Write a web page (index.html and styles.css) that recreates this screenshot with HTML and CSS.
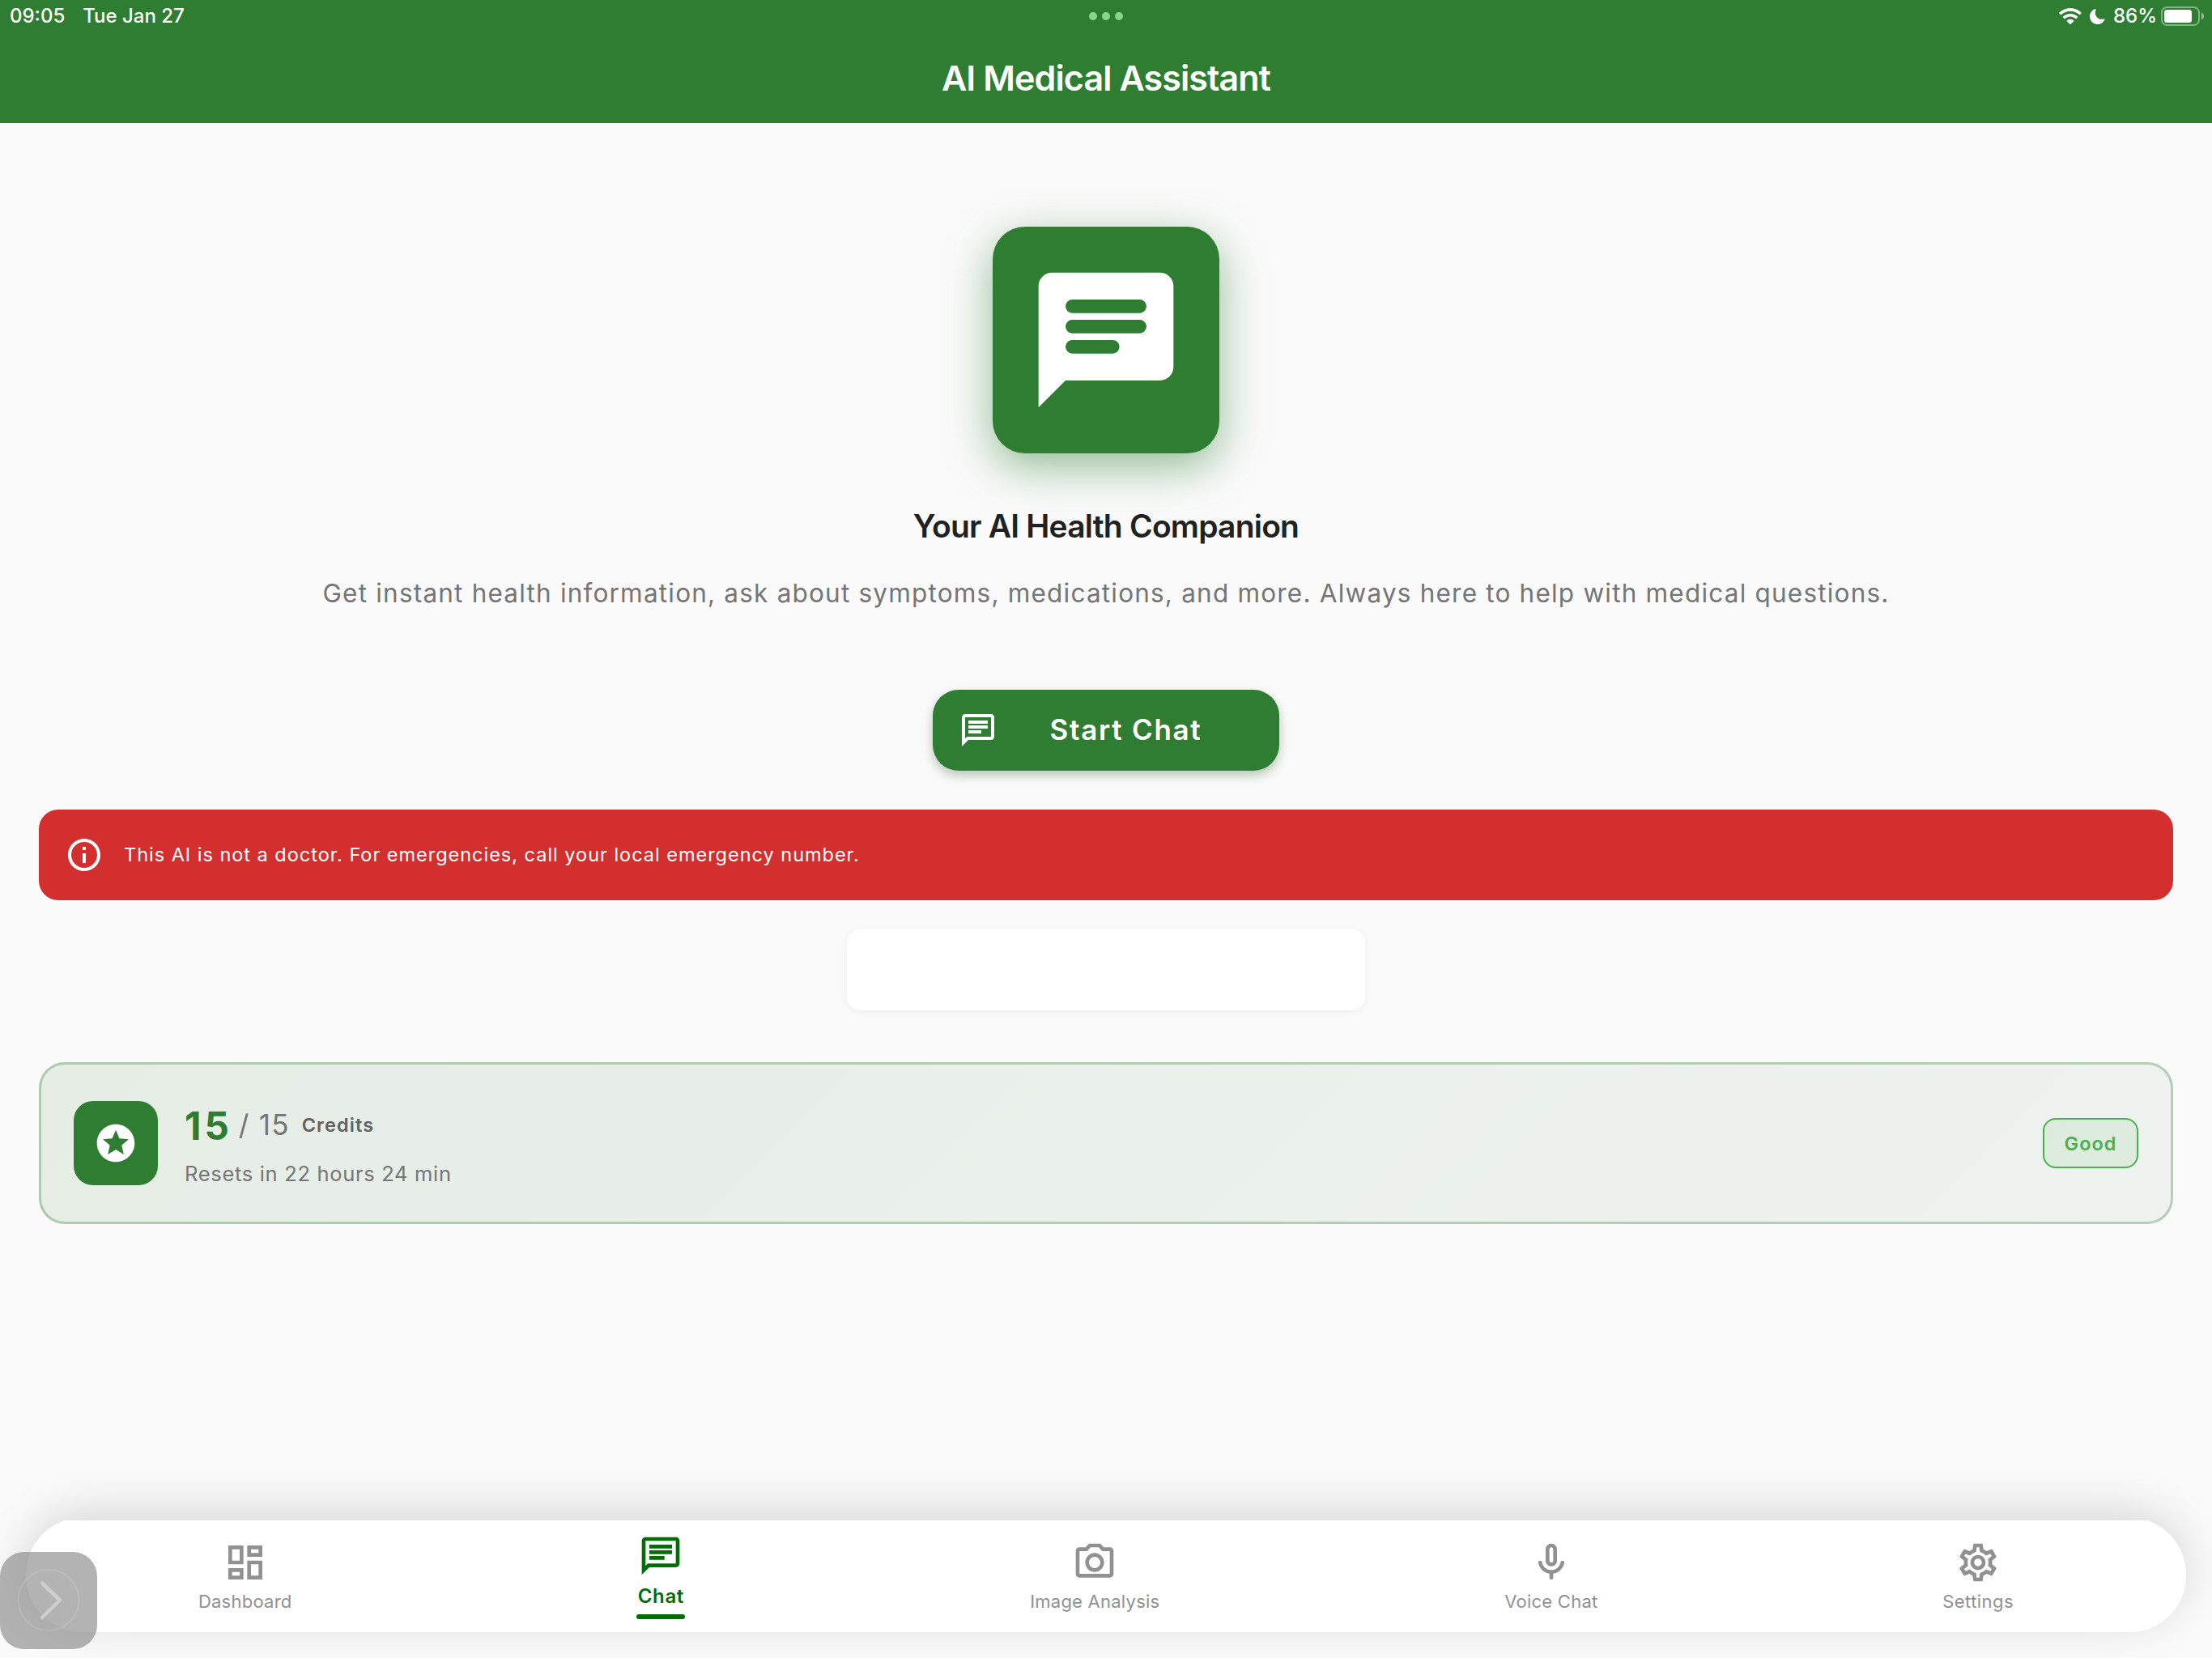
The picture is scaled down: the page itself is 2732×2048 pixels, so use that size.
FILE: index.html
```html
<!DOCTYPE html>
<html lang="en">
<head>
<meta charset="utf-8">
<title>AI Medical Assistant</title>
<link rel="stylesheet" href="styles.css">
</head>
<body>
<svg class="defs" aria-hidden="true">
  <symbol id="chat" viewBox="0 0 24 24"><path d="M4 4h16v12H5.170L4 17.170V4m0-2c-1.100 0-1.990.9-1.990 2L2 22l4-4h14c1.100 0 2-.9 2-2V4c0-1.100-.9-2-2-2H4zm2 10h8v2H6v-2zm0-3h12v2H6V9zm0-3h12v2H6V6z"/></symbol>
</svg>
<div class="screen">
  <header class="top">
    <div class="status">
      <div class="status-side"><span>09:05</span><span class="date">Tue Jan 27</span></div>
      <div class="dots"><i></i><i></i><i></i></div>
      <div class="status-side end">
        <svg class="wifi" viewBox="0 0 28 20"><path d="M14 0C8.700 0 3.900 2.100.4 5.400c-.3.300-.3.700 0 1l1.600 1.600c.3.300.7.300 1 0C5.900 5.300 9.800 3.700 14 3.700s8.100 1.600 11 4.300c.3.300.7.300 1 0l1.600-1.600c.3-.3.3-.7 0-1C24.100 2.100 19.300 0 14 0zM14 6.900c-3.500 0-6.600 1.300-9 3.500-.3.300-.3.700 0 1l1.600 1.600c.3.300.7.300 1 0 1.700-1.500 3.900-2.500 6.400-2.500s4.700 1 6.400 2.500c.3.300.7.300 1 0l1.600-1.600c.3-.3.3-.7 0-1-2.400-2.200-5.500-3.500-9-3.500zM14 13.700c-1.600 0-3.100.6-4.200 1.600-.3.300-.3.700 0 1l3.600 3.500c.3.300.8.300 1.100 0l3.700-3.500c.3-.3.300-.7 0-1-1.100-1-2.600-1.600-4.200-1.600z"/></svg>
        <svg class="moon" viewBox="0 0 19 19"><path d="M7 0C2.900 1.200 0 4.900 0 9.300 0 14.700 4.300 19 9.700 19c4.100 0 7.600-2.600 8.900-6.300.1-.4-.2-.7-.6-.5-1 .4-2 .6-3.100.6-4.500 0-8.100-3.600-8.100-8.100 0-1.400.3-2.700.9-3.900C7.900.3 7.500-.1 7 0z"/></svg>
        <span>86%</span>
        <svg class="battery" viewBox="0 0 54 24"><rect x="1" y="1" width="46" height="22" rx="6.500" fill="none" stroke="#fff" stroke-opacity=".42" stroke-width="2"/><rect x="4" y="4" width="34" height="16" rx="3.500"/><path d="M50 7.500c1.700.7 3 2.300 3 4.500s-1.300 3.800-3 4.500z" fill-opacity=".5"/></svg>
      </div>
    </div>
    <h1 class="title">AI Medical Assistant</h1>
  </header>

  <main class="content">
    <div class="hero"><svg class="hero-icon" viewBox="0 0 24 24"><path fill-rule="evenodd" d="M4 2h16c1.100 0 2 .9 2 2v12c0 1.100-.9 2-2 2H6l-4 4V4c0-1.100.9-2 2-2zM7 6a1 1 0 0 0 0 2h10a1 1 0 0 0 0-2zM7 9a1 1 0 0 0 0 2h10a1 1 0 0 0 0-2zM7 12a1 1 0 0 0 0 2h6a1 1 0 0 0 0-2z"/></svg></div>
    <h2 class="headline">Your AI Health Companion</h2>
    <p class="lead">Get instant health information, ask about symptoms, medications, and more. Always here to help with medical questions.</p>
    <button class="start"><svg class="start-icon"><use href="#chat"/></svg><span class="start-label">Start Chat</span></button>

    <div class="warning">
      <svg class="warning-icon" viewBox="0 0 24 24"><path d="M11 7h2v2h-2zm0 4h2v6h-2zm1-9C6.480 2 2 6.480 2 12s4.480 10 10 10 10-4.480 10-10S17.520 2 12 2zm0 18c-4.410 0-8-3.590-8-8s3.590-8 8-8 8 3.590 8 8-3.590 8-8 8z"/></svg>
      <span>This AI is not a doctor. For emergencies, call your local emergency number.</span>
    </div>

    <div class="blank-card"></div>

    <section class="credits">
      <div class="credits-icon"><svg viewBox="0 0 24 24"><path d="M11.990 2C6.470 2 2 6.480 2 12s4.470 10 9.990 10C17.520 22 22 17.520 22 12S17.520 2 11.990 2zm4.240 16L12 15.450 7.770 18l1.120-4.810-3.730-3.230 4.920-.42L12 5l1.920 4.530 4.920.42-3.730 3.230L16.230 18z"/></svg></div>
      <div class="credits-text">
        <div class="credits-row"><strong class="count">15</strong><span class="total">/ 15</span><span class="unit">Credits</span></div>
        <div class="resets">Resets in 22 hours 24 min</div>
      </div>
      <div class="badge">Good</div>
    </section>
  </main>

  <nav class="tabs">
    <a class="tab"><svg class="tab-icon" viewBox="0 0 24 24"><path d="M19 5v2h-4V5h4M9 5v6H5V5h4m10 8v6h-4v-6h4M9 17v2H5v-2h4M21 3h-8v6h8V3zM11 3H3v10h8V3zm10 8h-8v10h8V11zm-10 4H3v6h8v-6z"/></svg><span>Dashboard</span></a>
    <a class="tab active"><svg class="tab-icon"><use href="#chat"/></svg><span>Chat</span></a>
    <a class="tab"><svg class="tab-icon" viewBox="0 0 24 24"><path d="M14.120 4l1.830 2H20v12H4V6h4.050l1.830-2h4.240M15 2H9L7.170 4H4c-1.100 0-2 .9-2 2v12c0 1.100.9 2 2 2h16c1.100 0 2-.9 2-2V6c0-1.100-.9-2-2-2h-3.170L15 2zm-3 7c1.650 0 3 1.350 3 3s-1.350 3-3 3-3-1.350-3-3 1.350-3 3-3m0-2c-2.760 0-5 2.240-5 5s2.240 5 5 5 5-2.240 5-5-2.240-5-5-5z"/></svg><span>Image Analysis</span></a>
    <a class="tab"><svg class="tab-icon" viewBox="0 0 24 24"><path d="M12 14c1.660 0 3-1.340 3-3V5c0-1.660-1.340-3-3-3S9 3.340 9 5v6c0 1.660 1.340 3 3 3zm-1-9c0-.55.45-1 1-1s1 .45 1 1v6c0 .55-.45 1-1 1s-1-.45-1-1V5zm6.910 6c-.49 0-.9.36-.98.85C16.520 14.200 14.470 16 12 16s-4.520-1.800-4.930-4.150c-.08-.49-.49-.85-.98-.85-.61 0-1.090.54-1 1.140.49 3 2.890 5.350 5.910 5.780V20c0 .55.45 1 1 1s1-.45 1-1v-2.080c3.020-.43 5.420-2.780 5.910-5.780.1-.6-.39-1.140-1-1.140z"/></svg><span>Voice Chat</span></a>
    <a class="tab"><svg class="tab-icon" viewBox="0 0 24 24"><path d="M19.430 12.980c.04-.32.07-.64.07-.98s-.03-.66-.07-.98l2.110-1.650c.19-.15.24-.42.12-.64l-2-3.460c-.09-.16-.26-.25-.44-.25-.06 0-.12.01-.17.03l-2.490 1c-.52-.4-1.080-.73-1.690-.98l-.38-2.650C14.460 2.180 14.250 2 14 2h-4c-.25 0-.46.18-.49.42l-.38 2.650c-.61.25-1.170.59-1.690.98l-2.490-1c-.06-.02-.12-.03-.18-.03-.17 0-.34.09-.43.25l-2 3.460c-.13.22-.07.49.12.64l2.110 1.650c-.04.32-.07.65-.07.98s.03.66.07.98l-2.110 1.650c-.19.15-.24.42-.12.64l2 3.460c.09.16.26.25.44.25.06 0 .12-.01.17-.03l2.490-1c.52.4 1.080.73 1.690.98l.38 2.650c.03.24.24.42.49.42h4c.25 0 .46-.18.49-.42l.38-2.650c.61-.25 1.170-.59 1.690-.98l2.490 1c.06.02.12.03.18.03.17 0 .34-.09.43-.25l2-3.460c.12-.22.07-.49-.12-.64l-2.110-1.650zm-1.980-1.710c.04.31.05.52.05.73s-.02.43-.05.73l-.14 1.130.89.7 1.080.84-.7 1.210-1.270-.51-1.040-.42-.9.68c-.43.32-.84.56-1.250.73l-1.060.43-.16 1.130-.2 1.350h-1.400l-.19-1.350-.16-1.130-1.060-.43c-.43-.18-.83-.41-1.230-.71l-.91-.7-1.060.43-1.270.51-.7-1.210 1.080-.84.89-.7-.14-1.130c-.03-.31-.05-.54-.05-.74s.02-.43.05-.73l.14-1.130-.89-.7-1.080-.84.7-1.210 1.270.51 1.040.42.9-.68c.43-.32.84-.56 1.250-.73l1.060-.43.16-1.130.2-1.350h1.390l.19 1.350.16 1.130 1.060.43c.43.18.83.41 1.230.71l.91.7 1.060-.43 1.270-.51.7 1.210-1.070.85-.89.7.14 1.130zM12 8c-2.210 0-4 1.790-4 4s1.790 4 4 4 4-1.790 4-4-1.790-4-4-4zm0 6c-1.100 0-2-.9-2-2s.9-2 2-2 2 .9 2 2-.9 2-2 2z"/></svg><span>Settings</span></a>
  </nav>

  <div class="handle"><svg viewBox="0 0 120 120"><circle cx="60" cy="59.500" r="37.500"/><path d="M52 38.500 74 59.500 52 81"/></svg></div>
</div>
</body>
</html>
```
FILE: styles.css
```css
* { box-sizing: border-box; }
body { margin: 0; font-family: Inter, "Noto Sans", sans-serif; background: #fafafa; }
h1, h2, p { margin: 0; }
.defs { position: absolute; width: 0; height: 0; }
svg { display: block; flex: none; fill: currentColor; }

.screen { position: relative; display: flex; flex-direction: column; width: 2732px; height: 2048px; overflow: hidden; background: #fafafa; }

/* Status bar and title */
.top { height: 152px; background: #2e7d32; color: #fff; }
.status { display: grid; grid-template-columns: 1fr auto 1fr; align-items: center; height: 40px; padding: 0 9px; font-size: 24px; font-weight: 500; line-height: 40px; }
.status-side { display: flex; align-items: center; padding-left: 3px; }
.end { justify-content: flex-end; padding-left: 0; }
.date { margin-left: 22px; }
.dots { display: flex; gap: 6px; }
.dots i { width: 10px; height: 10px; border-radius: 50%; background: #86d58a; }
.wifi { width: 28px; height: 20px; margin-right: 10px; }
.moon { width: 19px; height: 19px; margin-right: 10px; }
.battery { width: 54px; height: 24px; margin-left: 5px; }
.title { text-align: center; font-size: 43px; line-height: 112px; font-weight: 600; letter-spacing: -.9px; }

/* Chat introduction */
.content { display: flex; flex-direction: column; align-items: center; padding: 128px 48px 0; }
.hero { display: grid; place-items: center; width: 280px; height: 280px; border-radius: 40px; background: #2e7d32; color: #fff; box-shadow: 0 16px 54px rgba(46, 125, 50, .5); }
.hero-icon { width: 200px; height: 200px; }
.headline { margin-top: 66px; font-size: 39px; line-height: 48px; font-weight: 600; letter-spacing: -.8px; color: #212121; }
.lead { margin-top: 33px; font-size: 31.5px; line-height: 52px; letter-spacing: 1.2px; color: #757575; white-space: nowrap; }
.start { display: flex; align-items: center; width: 428px; height: 100px; margin-top: 93px; padding: 0 32px; border: 0; border-radius: 32px; background: #2e7d32; color: #fff; font: 600 35px/44px Inter, sans-serif; letter-spacing: 1.7px; box-shadow: 0 6px 13px rgba(26, 80, 30, .3); }
.start-icon { width: 48px; height: 48px; }
.start-label { flex: 1; padding: 0 0 2px 1px; text-align: center; }

/* Emergency notice */
.warning { display: flex; align-items: center; gap: 25px; width: 100%; height: 112px; margin-top: 48px; padding: 0 32px; border-radius: 24px; background: #d32f2f; color: #fff; font-size: 23.5px; line-height: 32px; letter-spacing: .98px; }
.warning-icon { width: 48px; height: 48px; }

.blank-card { width: 640px; height: 100px; margin-top: 36px; border-radius: 16px; background: #fff; box-shadow: 0 2px 10px rgba(0, 0, 0, .05); }

/* Credit balance */
.credits { display: flex; align-items: center; width: 100%; height: 200px; margin-top: 64px; padding: 0 40px; border: 3px solid rgba(46, 125, 50, .3); border-radius: 32px; background: linear-gradient(135deg, #e5ede5, #eff3f0) border-box; }
.credits-icon { display: grid; place-items: center; width: 104px; height: 104px; border-radius: 24px; background: #2e7d32; color: #fff; }
.credits-icon svg { width: 56px; height: 56px; }
.credits-text { flex: 1; margin-left: 33px; padding-top: 4px; }
.credits-row { display: flex; align-items: center; height: 58px; }
.count { font-size: 47.5px; font-weight: 700; letter-spacing: 4px; color: #2e7d32; }
.total { margin-left: 8px; padding-bottom: 2px; font-size: 35px; letter-spacing: 1.2px; color: #757575; }
.unit { margin-left: 15px; padding-bottom: 1px; font-size: 23.5px; font-weight: 600; letter-spacing: 1.1px; color: #616161; }
.resets { margin-top: 14px; font-size: 25.5px; line-height: 34px; letter-spacing: .68px; color: #757575; }
.badge { display: grid; place-items: center; width: 118px; height: 62px; border: 2px solid #4caf50; border-radius: 16px; background: rgba(76, 175, 80, .1); color: #4caf50; font-size: 23.5px; font-weight: 600; letter-spacing: 1px; }

/* Floating tab bar */
.tabs { position: absolute; left: 32px; top: 1878px; display: flex; justify-content: space-around; width: 2668px; height: 138px; border-radius: 69px; box-shadow: 0 -12px 56px rgba(0, 0, 0, .14); color: #919191; }
.tabs::before { content: ""; position: absolute; inset: -4px 0 0; border-radius: 71px; background: #fff; clip-path: inset(4px 0 0); }
.tab { position: relative; display: flex; flex-direction: column; align-items: center; padding-top: 24px; font-size: 22px; line-height: 28px; letter-spacing: .24px; }
.tab:last-child { letter-spacing: .45px; }
.tab-icon { width: 56px; height: 56px; margin-bottom: 6px; }
.active { width: 60px; padding-top: 16px; color: #006e06; font-size: 24px; font-weight: 600; letter-spacing: .6px; }
.active .tab-icon { margin-bottom: 8px; }
.active::after { content: ""; width: 60px; height: 6px; margin-top: 8px; border-radius: 3px; background: currentColor; }

/* Side handle over the screen edge */
.handle { position: absolute; left: 0; top: 1917px; width: 120px; height: 120px; border-radius: 30px; background: rgba(120, 120, 120, .56); }
.handle svg { width: 120px; height: 120px; fill: none; stroke: #cecece; stroke-width: 4.5px; stroke-linecap: round; stroke-linejoin: round; }
.handle circle { stroke: #fff; stroke-opacity: .12; stroke-width: 2px; }
```
